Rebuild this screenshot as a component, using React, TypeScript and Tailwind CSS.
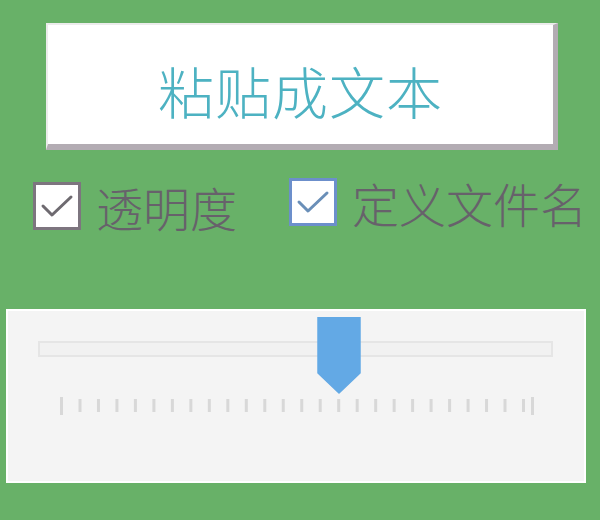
import React from "react";

const cjk = "font-['Noto_Sans_CJK_SC','Noto_Sans',sans-serif]";

function CheckBox({ label, tone }: { label: string; tone: "gray" | "blue" }) {
  const border = tone === "blue" ? "border-[#6c8fcb]" : "border-[#7d757f]";
  const stroke = tone === "blue" ? "#6a8fb8" : "#6e6a70";
  return (
    <div className="flex items-center gap-[15px]">
      <div className={`flex size-[48px] items-center justify-center border-[3px] bg-white ${border}`}>
        <svg width="34" height="28" viewBox="0 0 34 28">
          <polyline
            points="3,14 12,23 31,5"
            fill="none"
            stroke={stroke}
            strokeWidth="3"
            strokeLinecap="round"
            strokeLinejoin="round"
          />
        </svg>
      </div>
      <span className={`${cjk} text-[47px] font-light leading-none text-[#67616b]`}>{label}</span>
    </div>
  );
}

function Ticks() {
  const xs = Array.from({ length: 26 }, (_, i) => 2 + i * 18.48);
  return (
    <svg width="480" height="20" viewBox="0 0 480 20">
      {xs.map((x, i) => (
        <rect
          key={i}
          x={x}
          y={i === 0 ? 0 : 2}
          width="3"
          height={i === 0 ? 18 : 13}
          fill="#d8d8d8"
        />
      ))}
      <rect x="473" y="0" width="3" height="18" fill="#d8d8d8" />
    </svg>
  );
}

export default function App() {
  return (
    <div className="flex h-[520px] w-[600px] flex-col bg-[#68b168]">
      <button
        type="button"
        className="ml-[46px] mt-[23px] flex h-[127px] w-[512px] items-center justify-center border-t-2 border-l-2 border-r-[5px] border-b-[6px] border-t-[#ececec] border-l-[#ececec] border-r-[#b3acb3] border-b-[#b3acb3] bg-white pt-[10px]"
      >
        <span className={`${cjk} text-[56px] font-light leading-none tracking-[1px] text-[#4db2c2]`}>粘贴成文本</span>
      </button>

      <div className="ml-[33px] mt-[28px] flex h-[55px] items-start gap-[52px]">
        <div className="mt-[4px]">
          <CheckBox label="透明度" tone="gray" />
        </div>
        <CheckBox label="定义文件名" tone="blue" />
      </div>

      <div className="relative ml-[6px] mt-[76px] h-[174px] w-[580px] border-2 border-white bg-[#f4f4f4]">
        <div className="ml-[30px] mt-[30px] h-[16px] w-[515px] border-2 border-[#e5e5e5] bg-[#f1f1f1]" />
        <div className="ml-[50px] mt-[40px]">
          <Ticks />
        </div>
        <svg
          className="absolute left-[309px] top-[6px]"
          width="44"
          height="77"
          viewBox="0 0 44 77"
        >
          <path d="M1,0 H43 V56 L22,76 L1,56 Z" fill="#63a9e5" stroke="#63a9e5" strokeWidth="1.5" strokeLinejoin="round" />
        </svg>
      </div>
    </div>
  );
}
